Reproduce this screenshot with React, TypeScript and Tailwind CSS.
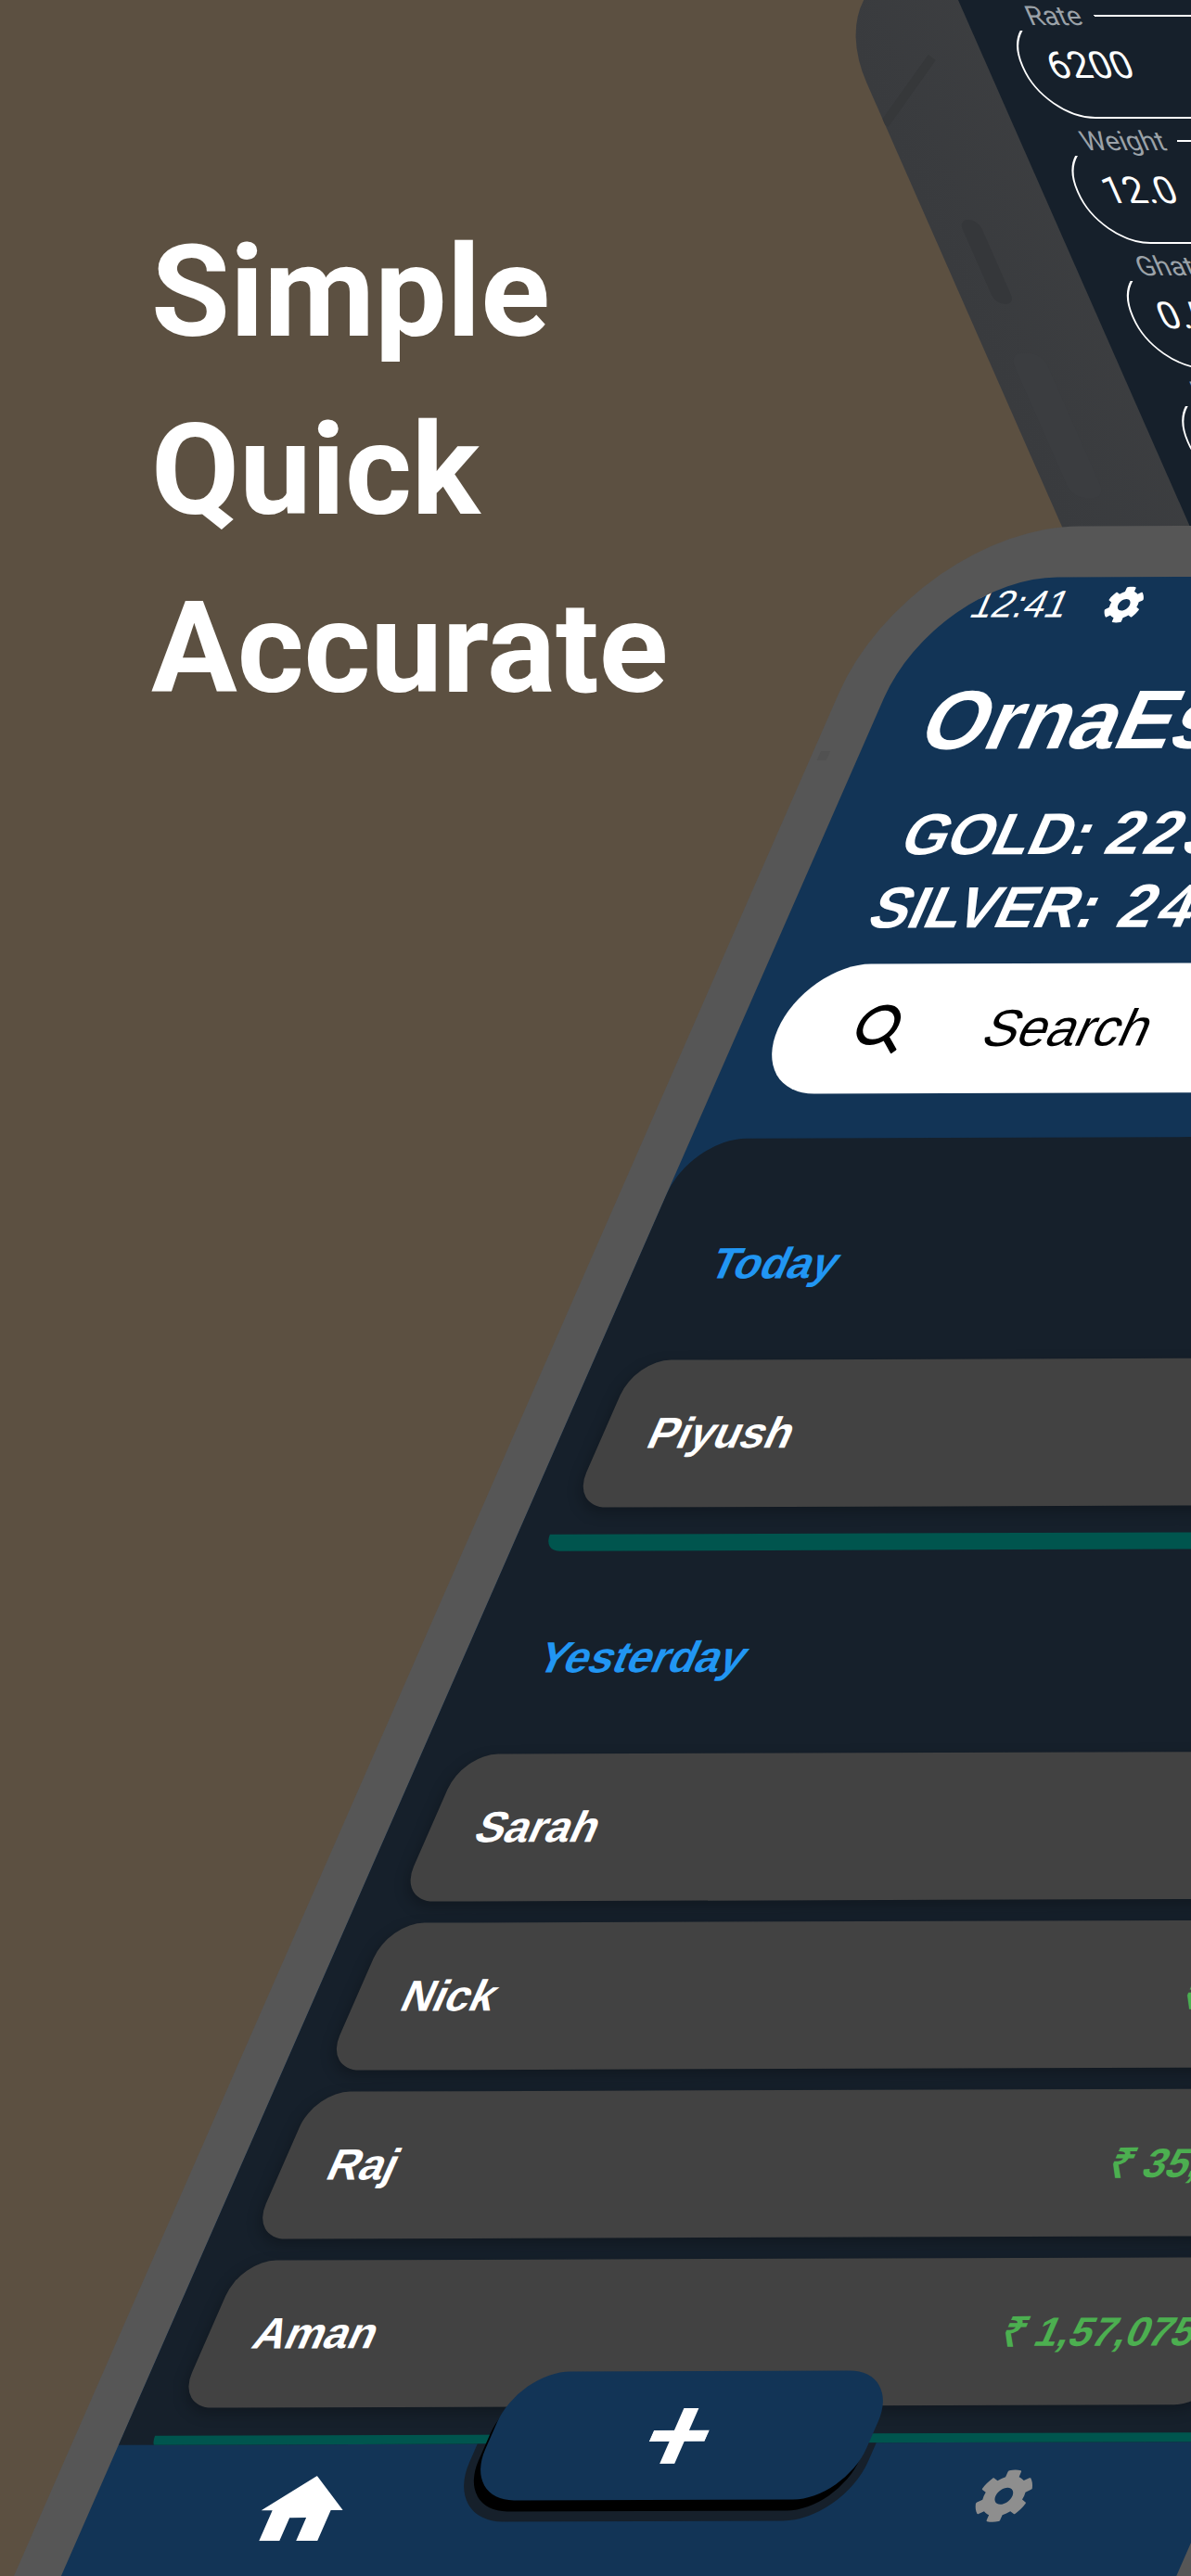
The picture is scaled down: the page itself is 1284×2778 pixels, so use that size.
import React from "react";
import { FaCog } from "react-icons/fa";

const fields = [
  { label: "Rate", value: "6200" },
  { label: "Weight", value: "12.0" },
  { label: "Ghat", value: "0.5" },
  { label: "Labour", value: "" },
];

const yesterday = [
  { name: "Sarah", amount: "₹ 24,500" },
  { name: "Nick", amount: "₹ 48,200" },
  { name: "Raj", amount: "₹ 35,000" },
  { name: "Aman", amount: "₹ 1,57,075" },
];

function Field({ label, value }: { label: string; value: string }) {
  return (
    <fieldset className="ml-[-3px] h-[127px] w-[760px] rounded-[55px] border-2 border-white">
      <legend className="ml-[13px] px-[14px] text-[29px] leading-[32px] text-[#9ba2a8]">{label}</legend>
      <div className="flex h-[75px] items-center pl-[27px] text-[40px] leading-none text-white">{value}</div>
    </fieldset>
  );
}

function Row({ name, amount }: { name: string; amount: string }) {
  return (
    <div className="mx-[45px] flex h-[159px] items-center justify-between rounded-[38px] bg-[#424242] pl-[51px] pr-[49px] shadow-[0_6px_14px_rgba(0,0,0,0.25)]">
      <span className="text-[47px] font-bold text-white">{name}</span>
      <span className="text-[44px] font-bold text-[#4caf50]">{amount}</span>
    </div>
  );
}

export default function App() {
  return (
    <div className="relative h-[2778px] w-[1284px] overflow-hidden bg-[#5c5041] font-['Liberation_Sans',sans-serif]">
      <div className="pl-[163px] pt-[219px] font-['Roboto',sans-serif] text-[138px] font-bold leading-[192px] text-white">
        <div>Simple</div>
        <div>Quick</div>
        <div>Accurate</div>
      </div>

      {/* Rear phone */}
      <div className="absolute left-[895px] top-[-40px] h-[800px] w-[900px] origin-[0_40px] overflow-hidden rounded-tl-[130px] bg-gradient-to-r from-[#393b3e] to-[#4b4b4b] font-['Roboto',sans-serif] [transform:skewX(23.75deg)]">
        <div className="absolute left-[-14px] top-[134px] h-[8px] w-[110px] bg-[#36383a] [transform:rotate(-41deg)]" />
        <div className="absolute left-[34px] top-[277px] h-[91px] w-[21px] rounded-[10px] bg-[#35373a]" />
        <div className="absolute left-[25px] top-[421px] h-[156px] w-[36px] rounded-[14px] bg-[#3b3d40]" />
        <div className="absolute bottom-0 left-[138px] right-0 top-0 flex flex-col gap-[8px] bg-[#16202b] pl-[40px] pt-[41px]">
          {fields.map((f) => (
            <Field key={f.label} label={f.label} value={f.value} />
          ))}
        </div>
      </div>

      {/* Front phone */}
      <div className="absolute left-[15px] top-[568px] h-[2300px] w-[1306px] origin-[0_2210px] rounded-t-[180px] bg-[#565656] pl-[51px] pt-[55px] [transform:matrix(1,-0.0032,-0.438,1,0,0)]">
        <div className="absolute left-[8px] top-[242px] h-[10px] w-[10px] bg-[#515151]" />
        <div className="flex h-[2240px] w-[1204px] flex-col overflow-hidden rounded-t-[130px] bg-[#123456]">
          {/* Header */}
          <div className="h-[605px] shrink-0">
            <div className="flex h-[60px] items-center pl-[52px] text-white">
              <span className="text-[41px]">12:41</span>
              <FaCog className="ml-[40px] h-[40px] w-[40px]" />
            </div>
            <div className="mt-[44px] h-[100px] whitespace-nowrap pl-[57px] text-[90px] font-bold leading-[100px] text-white">
              OrnaEstimate
            </div>
            <div className="mt-[34px] whitespace-nowrap pl-[88px] text-[63px] font-bold leading-[79px] text-white">
              <div className="h-[79px]">
                GOLD: <span className="text-[66px] leading-none tracking-[5px]">22350</span>
              </div>
              <div className="h-[79px] [word-spacing:7px]">
                SILVER: <span className="text-[66px] leading-none tracking-[5px]">2450</span>
              </div>
            </div>
            <div className="ml-[42px] mr-[35px] mt-[21px] flex h-[140px] items-center rounded-full bg-white pl-[84px]">
              <svg viewBox="0 0 52 52" className="h-[54px] w-[54px]" fill="none" stroke="#000" strokeWidth="6">
                <circle cx="22" cy="22" r="18" />
                <path d="M34 34 L50 50" />
              </svg>
              <span className="ml-[87px] text-[56px] text-black">Search</span>
            </div>
          </div>

          {/* List */}
          <div className="h-[1409px] shrink-0 overflow-hidden rounded-t-[60px] bg-[#16202b]">
            <div className="mt-[105px] h-[60px] pl-[83px] text-[47px] font-bold leading-[60px] text-[#2196f3]">Today</div>
            <div className="mt-[74px]">
              <Row name="Piyush" amount="₹ 62,400" />
            </div>
            <div className="ml-[35px] mr-[38px] mt-[29px] h-[18px] rounded-b-[20px] bg-[#00554e]" />
            <div className="mt-[85px] h-[60px] pl-[83px] text-[47px] font-bold leading-[60px] text-[#2196f3]">Yesterday</div>
            <div className="mt-[74px] flex flex-col gap-[23px]">
              {yesterday.map((r) => (
                <Row key={r.name} name={r.name} amount={r.amount} />
              ))}
            </div>
            <div className="ml-[35px] mr-[38px] mt-[30px] h-[18px] rounded-b-[20px] bg-[#00554e]" />
          </div>

          {/* Bottom navigation */}
          <div className="relative flex flex-1 items-start justify-between pl-[185px] pr-[195px] pt-[29px]">
            <div className="absolute left-[387px] top-0 h-[84px] w-[430px] rounded-b-[64px] bg-[#16202b]" />
            <div className="absolute left-[398px] top-[-78px] flex h-[139px] w-[411px] items-center justify-center rounded-[55px] bg-[#123456] pr-[6px] shadow-[-2px_12px_0_0_#000]">
              <svg viewBox="0 0 60 60" className="h-[60px] w-[60px]" fill="#fff">
                <rect x="0" y="24" width="60" height="12" />
                <rect x="22" y="0" width="16" height="60" />
              </svg>
            </div>
            <svg viewBox="0 0 88 70" className="mt-[5px] h-[70px] w-[88px]" fill="#fff">
              <path d="M44 0 L88 37 L75 37 L75 70 L52 70 L52 45 L34 45 L34 70 L12 70 L12 37 L0 37 Z" />
            </svg>
            <FaCog className="h-[58px] w-[58px] text-[#8e8e8e]" />
          </div>
        </div>
      </div>
    </div>
  );
}
